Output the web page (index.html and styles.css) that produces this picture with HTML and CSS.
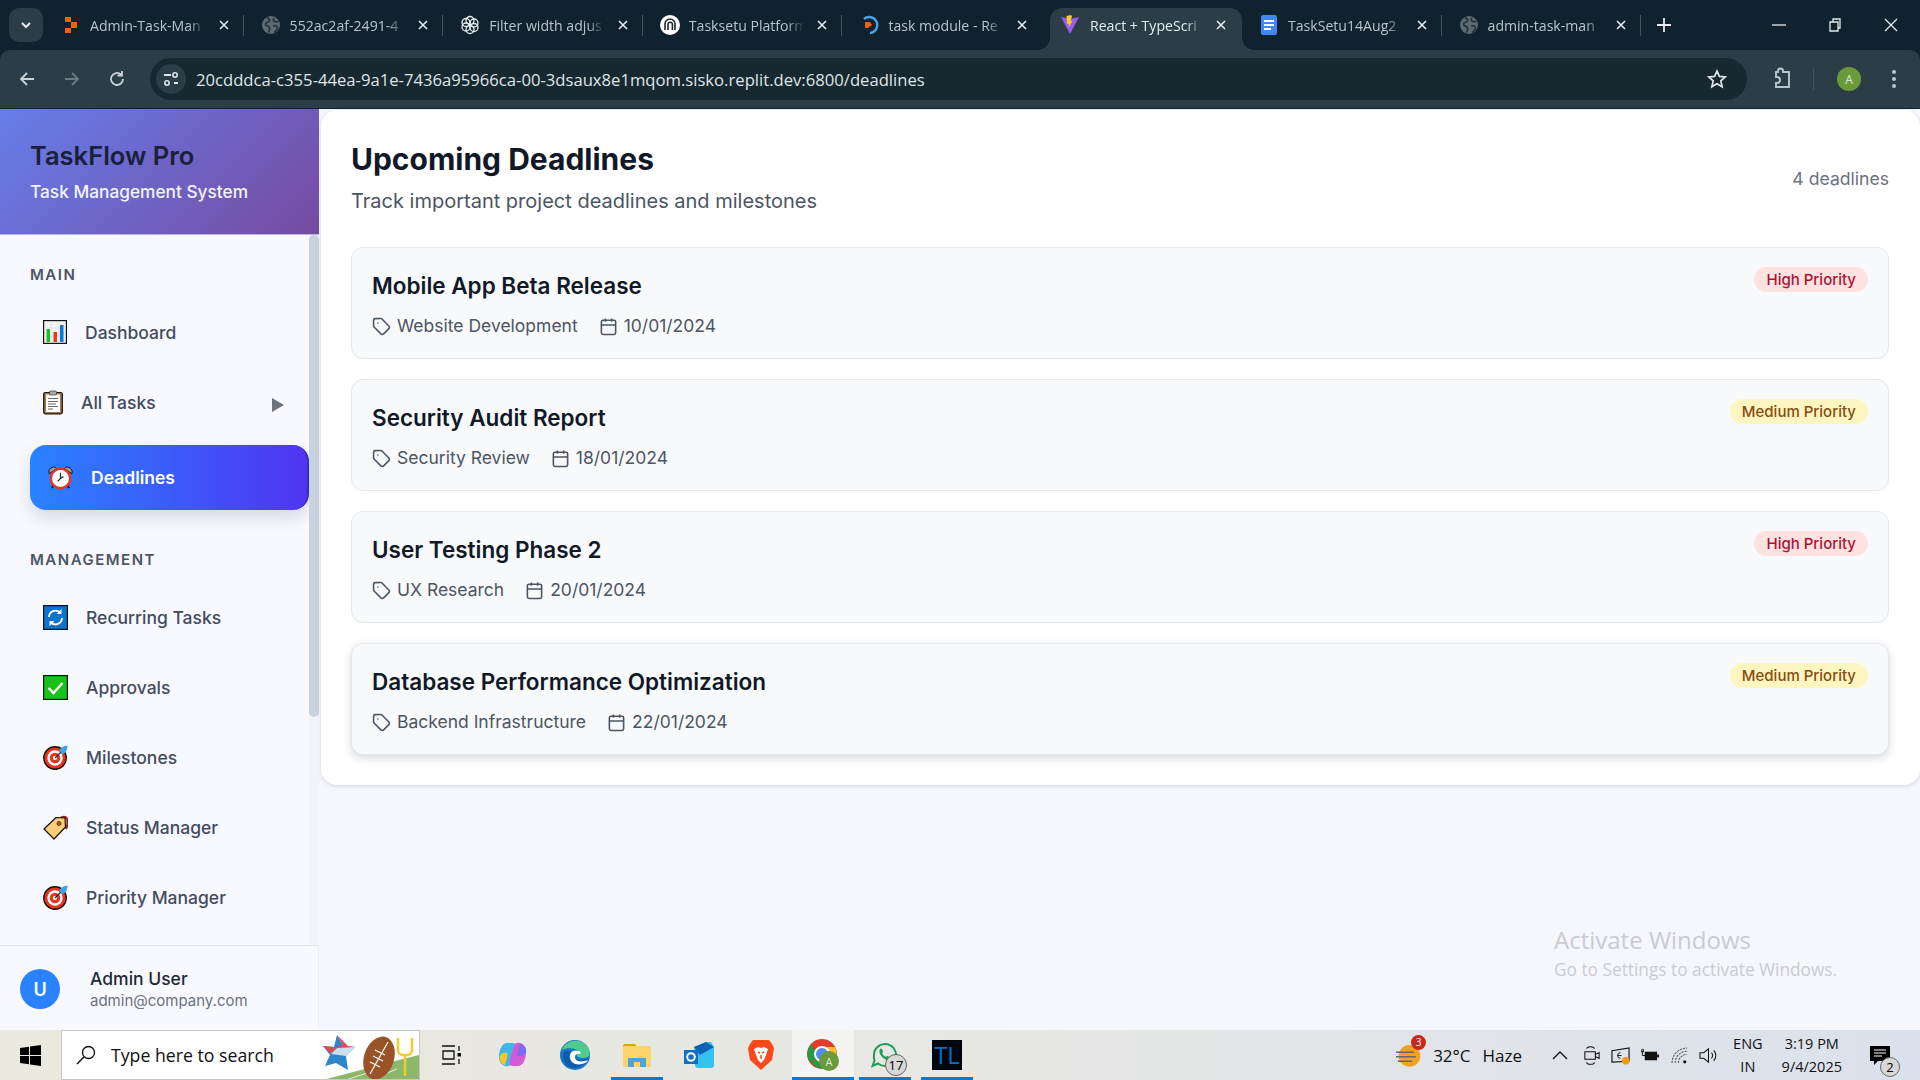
FILE: index.html
```html
<!DOCTYPE html>
<html lang="en">
<head>
	<meta charset="utf-8">
	<title>TaskFlow Pro - Deadlines</title>
	<link rel="stylesheet" href="styles.css">
</head>
<body>
	<svg class="defs" width="0" height="0">
		<symbol id="globe" viewBox="0 0 20 20">
			<circle cx="10" cy="10" r="9" fill="#5f6b72"/>
			<path d="M6 2.500c2 1 3 2 2.500 3.500S5 7 4.500 9s3 2 4 3.500-.5 3-1 5M13 3c-1 1.500-1 3 .5 3.500s3-.5 4 .5M12 11c2-1 4 0 4.500 1.500S14 17 13 17.500" fill="none" stroke="#26343c" stroke-width="1.800"/>
		</symbol>
		<symbol id="close" viewBox="0 0 12 12">
			<path d="M2 2l8 8M10 2l-8 8" stroke="currentColor" stroke-width="1.600" fill="none"/>
		</symbol>
		<symbol id="tag" viewBox="0 0 24 24">
			<path d="M12.600 2.600A2 2 0 0 0 11.200 2H4a2 2 0 0 0-2 2v7.200a2 2 0 0 0 .6 1.400l8.700 8.700a2.400 2.400 0 0 0 3.400 0l6.600-6.600a2.400 2.400 0 0 0 0-3.400z" fill="none" stroke="currentColor" stroke-width="2"/>
			<circle cx="7.500" cy="7.500" r="1" fill="currentColor"/>
		</symbol>
		<symbol id="cal" viewBox="0 0 24 24">
			<rect x="3" y="4" width="18" height="18" rx="2" fill="none" stroke="currentColor" stroke-width="2"/>
			<path d="M8 2v4M16 2v4M3 10h18" fill="none" stroke="currentColor" stroke-width="2"/>
		</symbol>
		<symbol id="target" viewBox="0 0 26 26">
			<circle cx="12.500" cy="13.500" r="11.700" fill="#e8321e" stroke="#111" stroke-width="1.400"/>
			<circle cx="12.500" cy="13.500" r="8" fill="#fff"/>
			<circle cx="12.500" cy="13.500" r="5.500" fill="#e8321e"/>
			<circle cx="12.500" cy="13.500" r="2.200" fill="#fff"/>
			<path d="M12.500 13.500L20 6" stroke="#333" stroke-width="1.500"/>
			<path d="M17 6c1-3 4-5 8.500-5.500 0 4.500-2 8-5.500 9z" fill="#3aa6ea"/>
		</symbol>
	</svg>

	<div class="browser">
		<div class="tabstrip">
			<div class="tab-search">
				<svg width="12" height="12" viewBox="0 0 12 12"><path d="M2 4l4 4 4-4" fill="none" stroke="#e6ecef" stroke-width="2"/></svg>
			</div>
			<div class="tab sep">
				<svg class="fav" viewBox="0 0 20 20"><path d="M4 2h6v5H4zM10 7h6v6h-6zM4 13h6v5H4z" fill="#f26207"/></svg>
				<span class="tab-title">Admin-Task-Man</span>
				<svg class="tab-x"><use href="#close"/></svg>
			</div>
			<div class="tab sep">
				<svg class="fav"><use href="#globe"/></svg>
				<span class="tab-title">552ac2af-2491-4</span>
				<svg class="tab-x"><use href="#close"/></svg>
			</div>
			<div class="tab sep">
				<svg class="fav" viewBox="0 0 20 20"><g fill="none" stroke="#e6ecef" stroke-width="1.300"><circle cx="10" cy="5.500" r="4"/><circle cx="14" cy="8" r="4"/><circle cx="14" cy="12.500" r="4"/><circle cx="10" cy="14.500" r="4"/><circle cx="6" cy="12" r="4"/><circle cx="6" cy="7.500" r="4"/></g></svg>
				<span class="tab-title">Filter width adjus</span>
				<svg class="tab-x"><use href="#close"/></svg>
			</div>
			<div class="tab sep">
				<svg class="fav" viewBox="0 0 20 20"><circle cx="10" cy="10" r="10" fill="#fff"/><path d="M5 15V9a5 5 0 0 1 10 0v6M8 15V9.500a2.200 2.200 0 0 1 4.400 0V15" fill="none" stroke="#1a2a33" stroke-width="1.600"/></svg>
				<span class="tab-title">Tasksetu Platform</span>
				<svg class="tab-x"><use href="#close"/></svg>
			</div>
			<div class="tab">
				<svg class="fav" viewBox="0 0 20 20"><path d="M5 4a8 8 0 1 1 6 14" fill="none" stroke="#4ba3e3" stroke-width="2.400"/><path d="M6 7h5l2 3-4 3H6z" fill="#f26207"/></svg>
				<span class="tab-title">task module - Re</span>
				<svg class="tab-x"><use href="#close"/></svg>
			</div>
			<div class="tab active">
				<svg class="fav" viewBox="0 0 20 20"><path d="M1 2l9 17 9-17-9 2z" fill="#9a5cf5"/><path d="M11 0L6.500 1l.5 8 2-.5-.5 4 4-6.500-2 .3 1.500-5z" fill="#fdcb1f"/></svg>
				<span class="tab-title">React + TypeScri</span>
				<svg class="tab-x"><use href="#close"/></svg>
			</div>
			<div class="tab sep">
				<svg class="fav" viewBox="0 0 20 20"><rect x="2" y="0" width="16" height="20" rx="2" fill="#4285f4"/><path d="M5 6h10M5 10h10M5 14h7" stroke="#fff" stroke-width="2"/></svg>
				<span class="tab-title">TaskSetu14Aug2</span>
				<svg class="tab-x"><use href="#close"/></svg>
			</div>
			<div class="tab sep">
				<svg class="fav"><use href="#globe"/></svg>
				<span class="tab-title">admin-task-man</span>
				<svg class="tab-x"><use href="#close"/></svg>
			</div>
			<svg class="new-tab" viewBox="0 0 14 14"><path d="M7 0v14M0 7h14" stroke="#e6ecef" stroke-width="1.800"/></svg>
			<div class="win-btns">
				<svg viewBox="0 0 14 14"><path d="M0 7h14" stroke="#e6ecef" stroke-width="1.300"/></svg>
				<svg viewBox="0 0 14 14"><path d="M2 4h8v9H2zM5 4V1h7v9h-2" fill="none" stroke="#e6ecef" stroke-width="1.300"/></svg>
				<svg viewBox="0 0 14 14"><path d="M1 1l12 12M13 1L1 13" stroke="#e6ecef" stroke-width="1.300"/></svg>
			</div>
		</div>

		<div class="toolbar">
			<svg class="tb-icon" viewBox="0 0 18 18"><path d="M16 9H3M9 3L3 9l6 6" fill="none" stroke="#c9d2d7" stroke-width="1.800"/></svg>
			<svg class="tb-icon dim" viewBox="0 0 18 18"><path d="M2 9h13M9 3l6 6-6 6" fill="none" stroke="#6d7b83" stroke-width="1.800"/></svg>
			<svg class="tb-icon" viewBox="0 0 18 18"><path d="M15 9a6 6 0 1 1-2-4.500M14 1v4.500H9.500" fill="none" stroke="#c9d2d7" stroke-width="1.800"/></svg>
			<div class="omnibox">
				<div class="site-info">
					<svg width="16" height="14" viewBox="0 0 16 14"><path d="M1 3h7M11 11h4" stroke="#dfe5e8" stroke-width="1.800"/><circle cx="12" cy="3" r="2.200" fill="none" stroke="#dfe5e8" stroke-width="1.600"/><circle cx="4" cy="11" r="2.200" fill="none" stroke="#dfe5e8" stroke-width="1.600"/></svg>
				</div>
				<span class="url">20cdddca-c355-44ea-9a1e-7436a95966ca-00-3dsaux8e1mqom.sisko.replit.dev:6800/deadlines</span>
				<svg class="star" viewBox="0 0 20 20"><path d="M10 2l2.400 5.400 5.800.6-4.400 3.900 1.300 5.800L10 14.700l-5.100 3 1.300-5.800L1.800 8l5.800-.6z" fill="none" stroke="#dfe5e8" stroke-width="1.700"/></svg>
			</div>
			<svg class="ext" viewBox="0 0 24 24"><path d="M9 4a2.500 2.500 0 0 1 5 0v1h6v15H7v-4h1a3 3 0 0 0 0-6H7V5h2z" fill="none" stroke="#b9c6cd" stroke-width="1.900"/></svg>
			<span class="tb-sep"></span>
			<span class="profile">A</span>
			<span class="kebab"><i></i><i></i><i></i></span>
		</div>
	</div>

	<div class="app">
		<aside class="sidebar">
			<div class="brand">
				<h1>TaskFlow Pro</h1>
				<p>Task Management System</p>
			</div>
			<nav class="nav">
				<div class="nav-label">Main</div>
				<a class="nav-item">
					<svg class="emoji" viewBox="0 0 24 24"><rect x=".6" y=".6" width="22.800" height="22.800" fill="#f3f3f3" stroke="#111" stroke-width="1.200"/><path d="M8 1v22M16 1v22M1 8h22M1 16h22" stroke="#ddd" stroke-width=".7"/><rect x="3.500" y="9" width="3.500" height="13" fill="#18c22a"/><rect x="10.500" y="12" width="3.500" height="10" fill="#ea3a1e"/><rect x="17" y="5" width="3.500" height="17" fill="#0b78d8"/></svg>
					Dashboard
				</a>
				<a class="nav-item has-sub">
					<svg class="emoji board" viewBox="0 0 20 24"><rect x=".7" y="2" width="18.600" height="21.300" rx="1.500" fill="#a9744a" stroke="#111" stroke-width="1.200"/><rect x="3" y="4" width="14" height="17.500" fill="#fff"/><rect x="6.500" y=".5" width="7" height="4" rx="1" fill="#aaa" stroke="#333" stroke-width=".7"/><path d="M5 8h10M5 11h10M5 13.500h8M5 16h10M5 18.500h5" stroke="#555" stroke-width=".9"/></svg>
					All Tasks
					<span class="caret"></span>
				</a>
				<a class="nav-item active">
					<svg class="emoji" viewBox="0 0 26 24"><path d="M1 8c-1-4 2-7 6-7l2 2zM25 8c1-4-2-7-6-7l-2 2z" fill="#9a9a9a" stroke="#111" stroke-width="1"/><path d="M6 20l-2 3M20 20l2 3" stroke="#111" stroke-width="1.800"/><circle cx="13" cy="13" r="10" fill="#fff" stroke="#e8321e" stroke-width="2.400"/><path d="M13 7v6l-3 3M13 13l3-2" stroke="#222" stroke-width="1.200" fill="none"/></svg>
					Deadlines
				</a>
				<div class="nav-label second">Management</div>
				<a class="nav-item wide">
					<svg class="emoji" viewBox="0 0 25 25"><rect x=".6" y=".6" width="23.800" height="23.800" fill="#0a74d0" stroke="#111" stroke-width="1.200"/><path d="M6 12a6.500 6.500 0 0 1 11-4.500M19 13a6.500 6.500 0 0 1-11 4.500" fill="none" stroke="#fff" stroke-width="1.900"/><path d="M18.500 4v5h-5zM6.500 21v-5h5z" fill="#fff"/></svg>
					Recurring Tasks
				</a>
				<a class="nav-item wide">
					<svg class="emoji" viewBox="0 0 25 25"><rect x=".6" y=".6" width="23.800" height="23.800" fill="#18c218" stroke="#111" stroke-width="1.200"/><path d="M5.500 13l5 5 9-10" fill="none" stroke="#fff" stroke-width="2.400"/></svg>
					Approvals
				</a>
				<a class="nav-item wide">
					<svg class="emoji"><use href="#target"/></svg>
					Milestones
				</a>
				<a class="nav-item wide">
					<svg class="emoji" viewBox="0 0 25 25"><path d="M16 4c3-3 7-3 8 0s0 8-1 10" fill="none" stroke="#9b1c10" stroke-width="2"/><path d="M1 14L13 2.500l9 .5.500 9L11 24z" fill="#fbcf7a" stroke="#111" stroke-width="1.200" stroke-linejoin="round"/><circle cx="16" cy="8.500" r="2" fill="#b5561b" stroke="#5a2a0a" stroke-width=".8"/></svg>
					Status Manager
				</a>
				<a class="nav-item wide">
					<svg class="emoji"><use href="#target"/></svg>
					Priority Manager
				</a>
				<div class="scroll-track"><div class="scroll-thumb"></div></div>
			</nav>
			<div class="user">
				<span class="avatar">U</span>
				<div>
					<div class="user-name">Admin User</div>
					<div class="user-mail">admin@company.com</div>
				</div>
			</div>
		</aside>

		<main class="content">
			<section class="panel">
				<header class="panel-head">
					<div>
						<h2>Upcoming Deadlines</h2>
						<p>Track important project deadlines and milestones</p>
					</div>
					<span class="count">4 deadlines</span>
				</header>
				<div class="cards">
					<article class="card">
						<div>
							<h3>Mobile App Beta Release</h3>
							<div class="meta">
								<span><svg><use href="#tag"/></svg>Website Development</span>
								<span><svg><use href="#cal"/></svg>10/01/2024</span>
							</div>
						</div>
						<span class="badge high">High Priority</span>
					</article>
					<article class="card">
						<div>
							<h3>Security Audit Report</h3>
							<div class="meta">
								<span><svg><use href="#tag"/></svg>Security Review</span>
								<span><svg><use href="#cal"/></svg>18/01/2024</span>
							</div>
						</div>
						<span class="badge medium">Medium Priority</span>
					</article>
					<article class="card">
						<div>
							<h3>User Testing Phase 2</h3>
							<div class="meta">
								<span><svg><use href="#tag"/></svg>UX Research</span>
								<span><svg><use href="#cal"/></svg>20/01/2024</span>
							</div>
						</div>
						<span class="badge high">High Priority</span>
					</article>
					<article class="card lifted">
						<div>
							<h3>Database Performance Optimization</h3>
							<div class="meta">
								<span><svg><use href="#tag"/></svg>Backend Infrastructure</span>
								<span><svg><use href="#cal"/></svg>22/01/2024</span>
							</div>
						</div>
						<span class="badge medium">Medium Priority</span>
					</article>
				</div>
			</section>
			<div class="activate">
				<div class="activate-big">Activate Windows</div>
				<div class="activate-small">Go to Settings to activate Windows.</div>
			</div>
		</main>
	</div>

	<div class="taskbar">
		<div class="start">
			<svg width="21" height="21" viewBox="0 0 21 21"><path d="M0 3l9-1.300V10H0zM10 1.500L21 0v10H10zM0 11h9v8.300L0 18zM10 11h11v10l-11-1.500z" fill="#000"/></svg>
		</div>
		<div class="search">
			<svg class="search-glass" viewBox="0 0 20 20"><circle cx="12.500" cy="7.500" r="6" fill="none" stroke="#111" stroke-width="1.300"/><path d="M8 12l-7 7" stroke="#111" stroke-width="1.500"/></svg>
			<span>Type here to search</span>
			<svg class="search-art" viewBox="0 0 100 50">
				<path d="M0 50L76 30l24-6v26z" fill="#8db86a"/>
				<path d="M24 50l30-10M48 50l30-12" stroke="#e4efd8" stroke-width="1"/>
				<path d="M18 4l6 11 12 1-9 9 2 14-12-7-11 3 5-11L4 15l11 1z" fill="#2c86c8"/>
				<path d="M18 4l6 11-9 1-11-1 8 8 5-6 19-1-7-1z" fill="#e0485a"/>
				<path d="M12 23l6-6 18-1-9 9z" fill="#f4f4f4" opacity=".8"/>
				<ellipse cx="60" cy="27" rx="15" ry="22" transform="rotate(18 60 27)" fill="#9a5327"/>
				<path d="M69 11L51 43M56 19l10 5M54 25l10 5M51 31l10 5" stroke="#fff" stroke-width="1.200"/>
				<path d="M79 7v12a5 5 0 0 0 5 5h4a5 5 0 0 0 5-5V7M86 24v21" fill="none" stroke="#f0cc2e" stroke-width="2.500"/>
			</svg>
		</div>
		<div class="task-btn">
			<svg width="21" height="20" viewBox="0 0 21 20"><path d="M1 1h13M1 19h13M2 6h11v8H2zM18 1v5M18 14v5" fill="none" stroke="#111" stroke-width="1.300"/><rect x="16.500" y="8" width="3.500" height="3.500" fill="#111"/></svg>
		</div>
		<div class="task-btn">
			<svg width="30" height="30" viewBox="0 0 30 30"><path d="M9 3h6c3 0 3 4 2 7l-4 13c-1 3-3 4-6 3-4-1-6-5-6-9C1 10 4 3 9 3z" fill="#3fb6e8"/><path d="M2 16c2-4 6-4 8-2l-3 11c-3 0-6-4-5-9z" fill="#f7c52e"/><path d="M20 26h-6c-3 0-3-4-2-7l4-13c1-3 3-4 6-3 4 1 6 5 6 9 0 7-3 14-8 14z" fill="#d15bd6"/><path d="M28 12c-2 5-7 5-9 3l3-11c3 0 7 3 6 8z" fill="#7a6cf0"/></svg>
		</div>
		<div class="task-btn">
			<svg width="30" height="30" viewBox="0 0 30 30"><circle cx="15" cy="15" r="15" fill="#1676c7"/><path d="M2 10C5 2 14-1 22 2s8 11 7 14c-3 3-12 3-13-2 0-2 2-3 3-3-3-3-12-4-17-1z" fill="#4ecb8d"/><path d="M14 15c0 5 6 7 14 3-3 8-12 12-18 9 -7-3-8-11-6-15 3-2 8-1 10 3z" fill="#0f5da8"/><path d="M10 18c-1-5 3-9 9-7 2 1 2 2 1 3-3-1-5 0-5 3 0 4 5 6 13 3-1 1-2 3-3 3-7 3-14 1-15-5z" fill="#fff"/></svg>
		</div>
		<div class="task-btn open">
			<svg width="28" height="24" viewBox="0 0 28 24"><path d="M0 3a2 2 0 0 1 2-2h10l2 3H0z" fill="#d9a013"/><rect y="3" width="28" height="21" rx="1" fill="#fcd569"/><path d="M5 24v-9h18v9h-6v-5h-6v5z" fill="#4aa3e2"/></svg>
		</div>
		<div class="task-btn">
			<svg width="30" height="26" viewBox="0 0 30 26"><path d="M10 5l12-5h5l3 5v18a3 3 0 0 1-3 3H14a3 3 0 0 1-3-3z" fill="#35c1f1"/><path d="M10 5l12-5 8 5-14 8z" fill="#0f63b5"/><rect y="8" width="14" height="14" fill="#0f6fc6"/><circle cx="7" cy="15" r="3.800" fill="none" stroke="#fff" stroke-width="2"/></svg>
		</div>
		<div class="task-btn">
			<svg width="26" height="30" viewBox="0 0 26 30"><path d="M5 0h16l3 4 2 4-2 12-11 10L2 20 0 8l2-4z" fill="#f9491b"/><path d="M6 9l4-2 3 1 3-1 4 2-2 6-2 5-3 3-3-3-2-5z" fill="#fff"/><path d="M10 12l2 1M16 12l-2 1M13 15v4" stroke="#f9491b" stroke-width="1.500"/></svg>
		</div>
		<div class="task-btn running lit">
			<svg width="32" height="32" viewBox="0 0 32 32"><circle cx="15" cy="15" r="15" fill="#e33b2e"/><path d="M3 23A15 15 0 0 1 4 5l7 13z" fill="#1f9e47"/><path d="M15 30a15 15 0 0 1-11-8l17-4z" fill="#1f9e47"/><path d="M15 8h13a15 15 0 0 1-2 17l-6-11z" fill="#fbc02d"/><circle cx="15" cy="15" r="7" fill="#4d8df5" stroke="#fff" stroke-width="2"/><circle cx="22" cy="22" r="10" fill="#6a9a3a"/><text x="22" y="27" class="chrome-a">A</text></svg>
		</div>
		<div class="task-btn running">
			<svg width="28" height="28" viewBox="0 0 28 28"><path d="M3 14a11 11 0 1 1 4 8.500L1.500 25l2-5.500A11 11 0 0 1 3 14z" fill="none" stroke="#1f9e5a" stroke-width="2"/><path d="M9 8c2-2 3 2 3 3l-1 1c1 2 2 3 4 4l1-1c2 0 4 2 3 3-4 4-13-5-10-10z" fill="#1f9e5a"/></svg>
			<span class="tb-badge">17</span>
		</div>
		<div class="task-btn running tl">
			<span class="tl-box">TL</span>
		</div>

		<div class="tray">
			<div class="weather">
				<svg class="weather-icon" viewBox="0 0 30 28"><circle cx="15" cy="15" r="12" fill="#f3a11e"/><path d="M0 11h20M0 16h22M2 21h16" stroke="#66676c" stroke-width="1.800"/></svg>
				<span class="weather-dot">3</span>
				<span class="temp">32°C</span>
				<span>Haze</span>
			</div>
			<svg class="tray-icon chevron" viewBox="0 0 16 10"><path d="M1 9l7-7 7 7" fill="none" stroke="#111" stroke-width="1.300"/></svg>
			<svg class="tray-icon" viewBox="0 0 16 20"><path d="M3 3c0-3 8-3 8 0M3 17c0 3 8 3 8 0M1 6h11v8H1zM12 9l4-2v6l-4-2" fill="none" stroke="#111" stroke-width="1.100"/></svg>
			<svg class="tray-icon" viewBox="0 0 20 20"><path d="M1 5l18-3v14l-18 1z" fill="none" stroke="#111" stroke-width="1.200"/><path d="M10 7a3 3 0 1 0 0 6M7 10h4" fill="none" stroke="#111" stroke-width="1"/><circle cx="15.500" cy="15.500" r="4" fill="#f59a10"/></svg>
			<svg class="tray-icon" viewBox="0 0 20 14"><path d="M1 3h3M2 0v3M3.500 0v3M2.500 3v4h3" fill="none" stroke="#111" stroke-width="1"/><rect x="5" y="3" width="13" height="9" fill="#111"/><rect x="18" y="6" width="2" height="3" fill="#111"/></svg>
			<svg class="tray-icon wifi" viewBox="0 0 18 16"><path d="M1 15A14 14 0 0 1 15 1M4 15A11 11 0 0 1 15 4M7 15a8 8 0 0 1 8-8" fill="none" stroke="#555" stroke-width="1" stroke-dasharray="2 1"/><circle cx="13" cy="14" r="1.500" fill="#111"/></svg>
			<svg class="tray-icon" viewBox="0 0 20 18"><path d="M1 6h4l5-4v14l-5-4H1zM13 6a4 4 0 0 1 0 6M15.500 3.500a8 8 0 0 1 0 11" fill="none" stroke="#111" stroke-width="1.100"/></svg>
			<div class="lang">ENG<br>IN</div>
			<div class="clock">3:19 PM<br>9/4/2025</div>
			<div class="notify">
				<svg width="20" height="19" viewBox="0 0 20 19"><path d="M0 0h20v15H8l-4 4v-4H0z" fill="#000"/><path d="M4 4h12M4 7h12M4 10h8" stroke="#fff" stroke-width="1"/></svg>
				<span class="tb-badge small">2</span>
			</div>
		</div>
	</div>
</body>
</html>
```

FILE: styles.css
```css
* {
	box-sizing: border-box;
}

html, body {
	margin: 0;
	padding: 0;
	height: 100%;
	overflow: hidden;
}

body {
	display: flex;
	flex-direction: column;
	height: 1080px;
	font-family: "Inter", "Liberation Sans", sans-serif;
	background: #f6f7fc;
}

.defs {
	position: absolute;
}

.browser {
	flex: none;
	background: #10222d;
}

/* browser tabs */
.tabstrip {
	height: 50px;
	display: flex;
	align-items: center;
	padding-left: 9px;
	font-family: "Open Sans", "Liberation Sans", sans-serif;
}

.tab-search {
	width: 34px;
	height: 34px;
	flex: none;
	margin-right: 1px;
	border-radius: 10px;
	background: #2b3d47;
	display: flex;
	align-items: center;
	justify-content: center;
}

.tab {
	position: relative;
	flex: 0 0 199.6px;
	min-width: 0;
	height: 50px;
	padding: 0 13px 0 17px;
	display: flex;
	align-items: center;
	color: #b9c4ca;
}

.tab.sep::after {
	content: "";
	position: absolute;
	right: 0;
	top: 15px;
	height: 21px;
	width: 1px;
	background: #45545c;
}

.tab.active {
	flex-basis: 192px;
	height: 42px;
	margin: 8px 0 0 8px;
	padding: 0 11px 8px 10px;
	background: #2b3d47;
	border-radius: 12px 12px 0 0;
	color: #e6ecef;
}

.tab.active::before,
.tab.active::after {
	content: "";
	position: absolute;
	bottom: 0;
	width: 12px;
	height: 12px;
	background: radial-gradient(circle at 0 0, #10222d 11.500px, #2b3d47 12px);
}

.tab.active::before {
	left: -12px;
}

.tab.active::after {
	right: -12px;
	transform: scaleX(-1);
}

.fav {
	width: 20px;
	height: 20px;
	flex: none;
	margin-right: 9px;
}

.tab.active .fav {
	margin-right: 10px;
}

.tab-title {
	flex: 1;
	min-width: 0;
	overflow: hidden;
	white-space: nowrap;
	font-size: 14.100px;
	-webkit-mask-image: linear-gradient(90deg, #000 85%, transparent);
	mask-image: linear-gradient(90deg, #000 85%, transparent);
}

.tab-x {
	width: 12px;
	height: 12px;
	flex: none;
	margin-left: 12px;
	margin-right: 1px;
	color: #e6ecef;
}

.tab.active .tab-x {
	margin-right: 4px;
}

.new-tab {
	width: 14px;
	height: 14px;
	flex: none;
	margin-left: 16px;
}

.win-btns {
	margin-left: auto;
	display: flex;
	gap: 42px;
	padding-right: 22px;
}

.win-btns svg {
	width: 14px;
	height: 14px;
}

/* address bar */
.toolbar {
	height: 59px;
	display: flex;
	align-items: center;
	background: #2b3d47;
	border-bottom: 1px solid #10222d;
	padding-left: 18px;
	border-radius: 10px 10px 0 0;
}

.tb-icon {
	width: 18px;
	height: 18px;
	flex: none;
	margin-right: 27px;
}

.omnibox {
	width: 1597px;
	flex: none;
	height: 42px;
	margin-left: -3px;
	border-radius: 21px;
	background: #172831;
	display: flex;
	align-items: center;
	padding: 0 20px 0 6px;
}

.site-info {
	width: 30px;
	height: 30px;
	border-radius: 50%;
	background: #2b3d47;
	display: flex;
	align-items: center;
	justify-content: center;
	margin-right: 10px;
}

.url {
	color: #dfe5e8;
	font-family: "Open Sans", "Liberation Sans", sans-serif;
	font-size: 16.650px;
	white-space: nowrap;
}

.star {
	width: 20px;
	height: 20px;
	margin-left: auto;
}

.ext {
	width: 24px;
	height: 24px;
	flex: none;
	margin-left: 22px;
}

.tb-sep {
	width: 1px;
	height: 22px;
	background: #45545c;
	margin-left: 20px;
}

.profile {
	width: 24px;
	height: 24px;
	flex: none;
	margin-left: 23px;
	border-radius: 50%;
	background: #6a9a3a;
	color: #dfe8d5;
	font: 12px "Open Sans", sans-serif;
	display: flex;
	align-items: center;
	justify-content: center;
}

.kebab {
	display: flex;
	flex-direction: column;
	gap: 3px;
	margin-left: 31px;
}

.kebab i {
	width: 4px;
	height: 4px;
	border-radius: 50%;
	background: #b9c6cd;
}

/* app */
.app {
	flex: 1;
	min-height: 0;
	display: flex;
}

.sidebar {
	width: 319px;
	flex: none;
	display: flex;
	flex-direction: column;
	background: #f8f9fe;
}

.brand {
	height: 126px;
	flex: none;
	padding: 31px 30px 0;
	background: linear-gradient(135deg, #667eea, #764ba2);
	border-bottom: 1px solid #b9b5e4;
}

.brand h1 {
	margin: 0;
	font-size: 25.500px;
	line-height: 32px;
	font-weight: 600;
	color: #1a1f3a;
}

.brand p {
	margin: 7px 0 0;
	font-size: 17.300px;
	line-height: 26px;
	font-weight: 500;
	color: #f1f3fe;
}

.nav {
	position: relative;
	flex: 1;
	min-height: 0;
	overflow: hidden;
	padding: 30px 10px 0 30px;
}

.scroll-track {
	position: absolute;
	top: 0;
	right: 0;
	bottom: 0;
	width: 10px;
	background: #f1f4f9;
}

.scroll-thumb {
	height: 482px;
	border-radius: 5px;
	background: #c8d3df;
}

.nav-label {
	font-size: 15px;
	line-height: 20px;
	font-weight: 600;
	letter-spacing: 1.500px;
	text-transform: uppercase;
	color: #4b5563;
	margin-bottom: 12px;
}

.nav-label.second {
	margin-top: 40px;
	margin-bottom: 12px;
}

.nav-item {
	height: 70px;
	display: flex;
	align-items: center;
	gap: 18px;
	padding-left: 13px;
	font-size: 17.500px;
	font-weight: 500;
	color: #434c5e;
}

.emoji {
	width: 24px;
	height: 24px;
	flex: none;
}

.wide .emoji {
	width: 25px;
	height: 25px;
}

.emoji.board {
	width: 20px;
	height: 25px;
}

.has-sub {
	position: relative;
	gap: 18px;
}

.caret {
	position: absolute;
	left: 242px;
	top: 31px;
	border-left: 12px solid #6b7280;
	border-top: 7px solid transparent;
	border-bottom: 7px solid transparent;
}

.nav-item.active {
	height: 65px;
	margin-top: 8px;
	padding-left: 18px;
	gap: 18px;
	border-radius: 16px;
	border-right: 2px solid #3a2cc0;
	background: linear-gradient(90deg, #2a82ff, #4f35f3);
	color: #fff;
	font-weight: 600;
	box-shadow: 0 8px 16px rgba(60, 70, 120, .18);
}

.nav-item.active .emoji {
	width: 25px;
	height: 25px;
}

.user {
	height: 85px;
	flex: none;
	display: flex;
	align-items: center;
	gap: 30px;
	padding: 2px 0 0 20px;
	border-top: 1px solid #e3e5ec;
	background: #f8f9fe;
	border-right: 1px solid #eceef4;
}

.avatar {
	width: 40px;
	height: 40px;
	border-radius: 50%;
	background: #2a82ff;
	color: #fff;
	font-size: 18px;
	font-weight: 600;
	display: flex;
	align-items: center;
	justify-content: center;
}

.user-name {
	font-size: 17.500px;
	line-height: 24px;
	font-weight: 500;
	color: #1f2937;
}

.user-mail {
	font-size: 15px;
	line-height: 20px;
	color: #6b7280;
}

/* page */
.content {
	position: relative;
	flex: 1;
	min-width: 0;
	padding: 1px 0 0 2px;
}

.panel {
	height: 675px;
	padding: 30px 31px 0 30px;
	background: #fff;
	border-radius: 16px;
	box-shadow: 0 1px 4px rgba(30, 40, 70, .16);
}

.panel-head {
	display: flex;
	justify-content: space-between;
	align-items: center;
	margin-bottom: 32px;
}

.panel-head h2 {
	margin: 0;
	font-size: 30px;
	line-height: 38px;
	font-weight: 700;
	color: #111827;
}

.panel-head p {
	margin: 9px 0 0;
	font-size: 20px;
	line-height: 28px;
	color: #4b5563;
}

.count {
	padding-top: 2px;
	font-size: 17.600px;
	color: #6b7280;
}

.cards {
	display: flex;
	flex-direction: column;
	gap: 20px;
}

.card {
	height: 112px;
	display: flex;
	justify-content: space-between;
	align-items: flex-start;
	padding: 20px;
	background: #f8f9fb;
	border: 1px solid #e5e7eb;
	border-radius: 12px;
}

.card.lifted {
	box-shadow: 0 3px 8px rgba(30, 40, 70, .18);
}

.card h3 {
	margin: 0;
	font-size: 22.500px;
	line-height: 36px;
	font-weight: 600;
	color: #111827;
}

.meta {
	display: flex;
	gap: 21px;
	margin-top: 9px;
	font-size: 17.500px;
	line-height: 26px;
	color: #4b5563;
}

.meta span {
	display: flex;
	align-items: center;
	gap: 6px;
}

.meta svg {
	width: 19px;
	height: 19px;
}

.badge {
	margin-top: -1px;
	padding: 0 12px;
	height: 25px;
	border-radius: 13px;
	font-size: 15px;
	line-height: 25px;
	font-weight: 500;
}

.badge.high {
	background: #fee2e2;
	color: #b01030;
}

.badge.medium {
	background: #fef6c0;
	color: #854d0e;
}

/* the watermark windows paints over everything */
.activate {
	position: absolute;
	left: 1235px;
	top: 815px;
	font-family: "Open Sans", "Liberation Sans", sans-serif;
	color: #c9cbd1;
}

.activate-big {
	font-size: 24px;
	line-height: 32px;
}

.activate-small {
	font-size: 17.300px;
	line-height: 27px;
}

/* windows taskbar */
.taskbar {
	height: 50px;
	flex: none;
	display: flex;
	background: linear-gradient(90deg, #e9e9dd, #e7e7e4 50%, #dbe1ec);
	font-family: "Open Sans", "Liberation Sans", sans-serif;
	color: #111;
}

.start {
	width: 61px;
	flex: none;
	display: flex;
	align-items: center;
	justify-content: center;
}

.search {
	position: relative;
	width: 359px;
	flex: none;
	display: flex;
	align-items: center;
	gap: 15px;
	padding-left: 14px;
	background: #fff;
	border: 1px solid #c8c8c8;
	font-size: 17.700px;
	overflow: hidden;
}

.search-glass {
	width: 20px;
	height: 20px;
}

.search-art {
	position: absolute;
	right: 0;
	top: 0;
	width: 100px;
	height: 50px;
}

.task-btn {
	position: relative;
	width: 62px;
	flex: none;
	display: flex;
	align-items: center;
	justify-content: center;
}

.task-btn.lit {
	background: #f4f4f2;
}

.task-btn.open::after,
.task-btn.running::after {
	content: "";
	position: absolute;
	left: 5px;
	right: 5px;
	bottom: 0;
	height: 3px;
	background: #0a78d4;
}

.task-btn.lit::after {
	left: 0;
	right: 0;
}

.chrome-a {
	font: 11px "Open Sans", sans-serif;
	fill: #dfe8d5;
	text-anchor: middle;
}

.tb-badge {
	position: absolute;
	left: 31px;
	top: 24px;
	width: 22px;
	height: 22px;
	border-radius: 50%;
	border: 1px solid #666;
	background: #d8d8d8;
	font-size: 13px;
	line-height: 20px;
	text-align: center;
	color: #000;
}

.tb-badge.small {
	left: 10px;
	top: 11px;
	width: 20px;
	height: 20px;
	line-height: 18px;
}

.tl-box {
	width: 30px;
	height: 30px;
	background: #00060d;
	color: #0a6fc0;
	font-size: 24px;
	line-height: 30px;
	text-align: center;
}

.tray {
	margin-left: auto;
	display: flex;
	align-items: center;
	font-size: 16px;
}

.weather {
	position: relative;
	display: flex;
	align-items: center;
	gap: 10px;
	margin-right: 30px;
	font-size: 17px;
}

.temp {
	margin-right: 2px;
}

.weather-icon {
	width: 27px;
	height: 28px;
}

.weather-dot {
	position: absolute;
	left: 15px;
	top: -6px;
	width: 15px;
	height: 15px;
	border-radius: 50%;
	background: #c42b1c;
	color: #fff;
	font-size: 10px;
	line-height: 15px;
	text-align: center;
}

.tray-icon {
	width: 19px;
	height: 19px;
	margin-right: 10px;
}

.tray-icon.chevron {
	width: 16px;
	height: 10px;
	margin-right: 14px;
}

.tray-icon.wifi {
	margin-left: 2px;
	margin-right: 9px;
}

.lang,
.clock {
	font-size: 14.500px;
	line-height: 23px;
	text-align: center;
}

.lang {
	margin-left: 5px;
}

.clock {
	margin-left: 19px;
}

.notify {
	position: relative;
	margin: 0 30px 0 28px;
	display: flex;
}
```
